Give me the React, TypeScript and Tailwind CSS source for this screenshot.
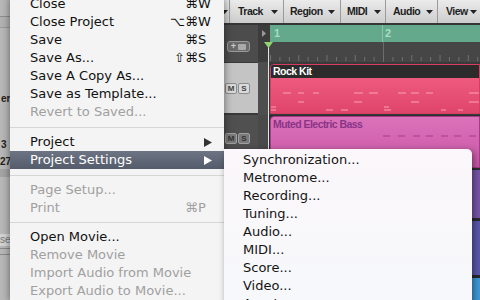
import React from "react";

type Item =
  | { sep: number }
  | {
      label: string;
      keys?: [string, string];
      disabled?: boolean;
      arrow?: boolean;
      active?: boolean;
    };

const fileMenu: Item[] = [
  { label: "Close", keys: ["⌘", "W"] },
  { label: "Close Project", keys: ["⌥⌘", "W"] },
  { label: "Save", keys: ["⌘", "S"] },
  { label: "Save As...", keys: ["⇧⌘", "S"] },
  { label: "Save A Copy As..." },
  { label: "Save as Template..." },
  { label: "Revert to Saved...", disabled: true },
  { sep: 12 },
  { label: "Project", arrow: true },
  { label: "Project Settings", arrow: true, active: true },
  { sep: 12 },
  { label: "Page Setup...", disabled: true },
  { label: "Print", keys: ["⌘", "P"], disabled: true },
  { sep: 11 },
  { label: "Open Movie..." },
  { label: "Remove Movie", disabled: true },
  { label: "Import Audio from Movie", disabled: true },
  { label: "Export Audio to Movie...", disabled: true },
];

const settingsMenu = [
  "Synchronization...",
  "Metronome...",
  "Recording...",
  "Tuning...",
  "Audio...",
  "MIDI...",
  "Score...",
  "Video...",
  "Assets...",
];

const tabs = [
  { label: "Track", w: "w-[53px]", pl: "pl-[8px]", pr: "pr-[5px]" },
  { label: "Region", w: "w-[56px]", pl: "pl-[6px]", pr: "pr-[5px]" },
  { label: "MIDI", w: "w-[44px]", pl: "pl-[6px]", pr: "pr-[4px]" },
  { label: "Audio", w: "w-[51px]", pl: "pl-[7px]", pr: "pr-[4px]" },
  { label: "View", w: "w-[42px]", pl: "pl-[8px]", pr: "pr-[3px]" },
];

// note dashes inside the Rock Kit region, [y, x1, x2]
const drumNotes: [number, number, number][] = [
  [15, 12, 20], [15, 27, 33], [15, 42, 48], [15, 83, 92], [15, 98, 107],
  [15, 127, 135], [15, 140, 148], [15, 155, 162], [15, 198, 212],
  [24, 27, 33], [24, 83, 91], [24, 140, 148], [24, 198, 212],
  [29, 0, 5], [29, 113, 118],
  [32, 0, 5], [32, 55, 62], [32, 70, 77], [32, 113, 120], [32, 170, 175], [32, 187, 192],
];

const bassNotes = [112, 127, 142, 155, 170, 183, 198];

function Caret() {
  return (
    <svg width="7" height="4" viewBox="0 0 7 4">
      <polygon points="0,0 7,0 3.5,4" fill="#222" />
    </svg>
  );
}

function MS({ light }: { light?: boolean }) {
  const btn = light
    ? "bg-[#dadada] border-[#8c8c8c] text-[#444]"
    : "bg-[#7a7a7a] border-[#a0a0a0] text-[#333]";
  return (
    <div className="flex gap-[1px] ml-[5px]">
      <div className={`w-[12px] h-[11px] border rounded-[2px] flex items-center justify-center text-[8px] font-bold ${btn}`}>M</div>
      <div className={`w-[12px] h-[11px] border rounded-[2px] flex items-center justify-center text-[8px] font-bold ${btn}`}>S</div>
    </div>
  );
}

export default function App() {
  return (
    <div className="relative w-[480px] h-[300px] overflow-hidden bg-[#3a3a3a] font-['Liberation_Sans','DejaVu_Sans',sans-serif]">
      <div className="flex h-full">
        {/* Inspector (mostly under the menu) */}
        <div className="w-[220px] h-full bg-[#b8b8b8] flex flex-col text-[10px] font-bold text-[#222]">
          <div className="h-[16px]" />
          <div className="h-px bg-[#8e8e8e]" />
          <div className="h-[10px] bg-[#b2b2b2]" />
          <div className="h-px bg-[#9a9a9a]" />
          <div className="h-[65px]" />
          <div className="h-[12px] pl-[1px] leading-[12px]">er</div>
          <div className="h-[34px]" />
          <div className="h-[12px] pl-[1px] leading-[12px]">3</div>
          <div className="h-[5px]" />
          <div className="h-[12px] leading-[12px]">27</div>
          <div className="h-px" />
          <div className="h-[8px] bg-[#a4a4a4]" />
          <div className="h-[57px]" />
          <div className="h-[12px] w-[10px] leading-[12px] bg-[#d4d4d4] font-normal text-[#777]">se</div>
          <div className="h-[2px]" />
          <div className="h-px bg-[#8a8a8a]" />
          <div className="h-[5px]" />
          <div className="h-px bg-[#8a8a8a]" />
        </div>

        {/* Arrange area */}
        <div className="w-[260px] h-full flex flex-col">
          {/* local menu bar */}
          <div className="h-[25px] border-b-2 border-[#363636] bg-gradient-to-b from-[#ebebeb] to-[#cdcdcd] flex text-[10.5px] font-bold tracking-[-0.5px] text-[#1e1e1e]">
            <div className="w-[9px] flex items-center justify-end pr-[1px]">
              <Caret />
            </div>
            {tabs.map((t) => (
              <React.Fragment key={t.label}>
                <div className="w-px bg-[#9a9a9a]" />
                <div className={`${t.w} ${t.pl} ${t.pr} flex items-center justify-between`}>
                  <span>{t.label}</span>
                  <Caret />
                </div>
              </React.Fragment>
            ))}
          </div>

          <div className="relative flex-1 flex flex-col">
            {/* ruler row */}
            <div className="h-[37px] flex">
              <div className="w-[38px] bg-[#4c4c4c] pt-[16px]">
                <div className="ml-[7px] w-[23px] h-[11px] rounded-[3px] border border-[#9a9a9a] bg-[#6a6a6a] flex items-center justify-center gap-[2px] text-[9px] font-bold text-[#ccc] leading-none">
                  <span>+</span>
                  <div className="w-[8px] h-[6px] rounded-[1px] bg-[#aaa]" />
                </div>
              </div>
              <div className="w-[10px] bg-[#3c3c3c] flex flex-col">
                <div className="h-[17px] flex items-center pl-[4px]">
                  <svg width="4" height="7" viewBox="0 0 4 7">
                    <polygon points="0,0 4,3.5 0,7" fill="#9a9a9a" />
                  </svg>
                </div>
              </div>
              <div className="w-[212px] flex flex-col">
                <div className="h-[17px] bg-[#64a98b] flex text-[11px] font-bold text-[#a9dcc4]">
                  <div className="w-[2px] bg-[#3c3c3c]" />
                  <div className="w-[113px] pl-[4px] leading-[17px] border-r border-[#8cc4aa]">1</div>
                  <div className="pl-[2px] leading-[17px]">2</div>
                </div>
                <div className="h-[20px] bg-[#464646]">
                  <svg width="212" height="20" viewBox="0 0 212 20">
                    <line x1="115.5" y1="0" x2="115.5" y2="20" stroke="#6a6a6a" />
                    {Array.from({ length: 23 }).map((_, i) => {
                      const x = 2 + i * 9.42;
                      return (
                        <line key={i} x1={x + 0.5} y1={i % 3 === 0 ? 13 : 15} x2={x + 0.5} y2={19} stroke="#707070" />
                      );
                    })}
                  </svg>
                </div>
              </div>
            </div>

            {/* track 1: Rock Kit */}
            <div className="h-[53px] flex">
              <div className="w-[38px] bg-[#c4c4c4] border-t border-b-2 border-[#3a3a3a] pt-[20px]">
                <MS light />
              </div>
              <div className="w-[10px] bg-[#4e4e4e]" />
              <div className="w-[212px] bg-[#3a3a3a] pt-[2px] pl-[2px]">
                <div className="h-[50px] rounded-tl-[4px] border border-[#d83c62] flex flex-col overflow-hidden">
                  <div className="h-[13px] bg-[#2b2b2b] pl-[2px] text-[10.5px] font-bold tracking-[-0.5px] text-white leading-[13px]">Rock Kit</div>
                  <div className="flex-1 bg-gradient-to-b from-[#ee5a7e] to-[#df446b]">
                    <svg width="210" height="36" viewBox="0 0 210 36">
                      {drumNotes.map(([y, a, b], i) => (
                        <line key={i} x1={a} y1={y} x2={b} y2={y} stroke="#f6a3b8" strokeWidth="1" />
                      ))}
                    </svg>
                  </div>
                </div>
              </div>
            </div>

            {/* track 2: Muted Electric Bass */}
            <div className="h-[54px] flex">
              <div className="w-[38px] bg-[#505050] pt-[18px]">
                <MS />
              </div>
              <div className="w-[10px] bg-[#4a4a4a]" />
              <div className="w-[212px] bg-[#2e2e2e] pt-[1px] pl-[2px]">
                <div className="h-[52px] rounded-tl-[4px] border border-[#a83a8c] bg-gradient-to-b from-[#dc72ba] to-[#c957a6] flex flex-col">
                  <div className="h-[14px] pl-[2px] pt-[1px] text-[10.5px] font-bold tracking-[-0.55px] text-[#893587] leading-[13px]">Muted Electric Bass</div>
                  <svg width="210" height="20" viewBox="0 0 210 20">
                    {bassNotes.map((x) => (
                      <line key={x} x1={x} y1={5} x2={x + 7} y2={5} stroke="#a8388a" strokeWidth="1" />
                    ))}
                  </svg>
                </div>
              </div>
            </div>

            {/* tracks behind the submenu */}
            <div className="h-[51px] flex">
              <div className="w-[38px] bg-[#505050]" />
              <div className="w-[10px] bg-[#4a4a4a]" />
              <div className="w-[212px] bg-[#2a2a2a] pt-[1px] pl-[2px]">
                <div className="h-[48px] rounded-tl-[4px] bg-[#7856a8]" />
              </div>
            </div>
            <div className="h-[57px] flex">
              <div className="w-[38px] bg-[#505050]" />
              <div className="w-[10px] bg-[#4a4a4a]" />
              <div className="w-[212px] bg-[#2a2a2a] pt-[1px] pl-[2px]">
                <div className="h-[54px] rounded-tl-[4px] bg-[#5a58aa]" />
              </div>
            </div>
            <div className="flex-1 flex">
              <div className="w-[38px] bg-[#505050]" />
              <div className="w-[10px] bg-[#4a4a4a]" />
              <div className="w-[212px] bg-[#2a2a2a] pt-[1px] pl-[2px]">
                <div className="h-full rounded-tl-[4px] bg-[#3f9ad8]" />
              </div>
            </div>

            {/* playhead */}
            <div className="absolute left-[48px] top-[17px] bottom-0 w-px bg-[#e4e4e4]" />
            <svg className="absolute left-[44px] top-[17px]" width="9" height="6" viewBox="0 0 9 6">
              <polygon points="0,0 9,0 4.5,6" fill="#8fd46e" />
            </svg>
          </div>
        </div>
      </div>

      {/* File menu */}
      <div className="absolute left-[10px] top-[-5px] w-[214px] bg-[#f4f4f4] shadow-[0_2px_8px_rgba(0,0,0,0.5)] font-['DejaVu_Sans',sans-serif] text-[13px] text-[#111]">
        {fileMenu.map((it, i) => {
          if ("sep" in it) {
            return (
              <div key={i} className={`${it.sep === 12 ? "h-[12px]" : "h-[11px]"} flex items-center`}>
                <div className="h-px w-full bg-[#d6d6d6]" />
              </div>
            );
          }
          const color = it.active ? "text-white" : it.disabled ? "text-[#a0a0a0]" : "text-[#111]";
          return (
            <div
              key={i}
              className={`h-[18px] pl-[20px] pr-[10px] flex items-center justify-between leading-[18px] ${color} ${
                it.active ? "bg-gradient-to-b from-[#6d7585] to-[#545b6a]" : ""
              }`}
            >
              <span>{it.label}</span>
              {it.keys && (
                <span className="flex">
                  <span>{it.keys[0]}</span>
                  <span className="w-[16px]">{it.keys[1]}</span>
                </span>
              )}
              {it.arrow && (
                <svg className="mr-[2px]" width="8" height="9" viewBox="0 0 8 9">
                  <polygon points="0,0 8,4.5 0,9" fill={it.active ? "#fff" : "#333"} />
                </svg>
              )}
            </div>
          );
        })}
      </div>

      {/* Project Settings submenu */}
      <div className="absolute left-[224px] top-[149px] w-[248px] h-[160px] pt-[2px] rounded-tr-[5px] bg-gradient-to-b from-[#fbf7fa] to-[#f6f8fb] shadow-[2px_2px_7px_rgba(0,0,0,0.45)] font-['DejaVu_Sans',sans-serif] text-[13px] text-[#141414]">
        {settingsMenu.map((s) => (
          <div key={s} className="h-[18px] pl-[19px] leading-[18px]">
            {s}
          </div>
        ))}
      </div>
    </div>
  );
}
